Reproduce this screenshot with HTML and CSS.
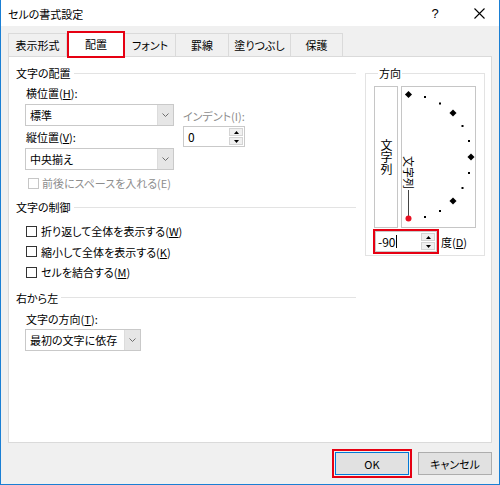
FILE: index.html
```
<!DOCTYPE html>
<html lang="ja">
<head>
<meta charset="utf-8">
<title>セルの書式設定</title>
<link rel="stylesheet" href="styles.css">
</head>
<body>
<div class="window">
  <div class="titlebar">
    <span class="title">セルの書式設定</span>
    <span class="tb-btn help">?</span>
    <span class="tb-btn close"><svg width="11" height="11" viewBox="0 0 11 11"><path d="M0.5 0.5L10.5 10.5M10.5 0.5L0.5 10.5" stroke="#000" stroke-width="1.1" fill="none"/></svg></span>
  </div>
  <div class="main">
    <div class="tabs">
      <div class="tab t1">表示形式</div>
      <div class="tab active">配置</div>
      <div class="tab t3">フォント</div>
      <div class="tab t4">罫線</div>
      <div class="tab t5">塗りつぶし</div>
      <div class="tab t6">保護</div>
    </div>
    <div class="panel">
      <div class="left">
        <div class="ghead">文字の配置</div>
        <div class="sec">
          <div class="align-row">
            <div class="col-sel">
              <div class="lbl">横位置(<u>H</u>):</div>
              <div class="select sel-wide gap3"><span class="v">標準</span><span class="dd"><svg width="7" height="4" viewBox="0 0 7 4"><path d="M0.5 0.5L3.5 3.5L6.5 0.5" stroke="#6d6d6d" fill="none"/></svg></span></div>
              <div class="lbl gap3">縦位置(<u>V</u>):</div>
              <div class="select sel-wide gap3"><span class="v">中央揃え</span><span class="dd"><svg width="7" height="4" viewBox="0 0 7 4"><path d="M0.5 0.5L3.5 3.5L6.5 0.5" stroke="#6d6d6d" fill="none"/></svg></span></div>
            </div>
            <div class="col-indent">
              <div class="lbl dis">インデント(I):</div>
              <div class="spin indent-spin">
                <span class="val">0</span>
                <span class="arrows">
                  <span class="ar"><svg width="5" height="3" viewBox="0 0 5 3"><path d="M0 3L2.5 0L5 3Z" fill="#000"/></svg></span>
                  <span class="ar"><svg width="5" height="3" viewBox="0 0 5 3"><path d="M0 0L2.5 3L5 0Z" fill="#000"/></svg></span>
                </span>
              </div>
            </div>
          </div>
          <div class="check dis-row"><span class="box"></span>前後にスペースを入れる(E)</div>
        </div>
        <div class="ghead gh2">文字の制御</div>
        <div class="sec">
          <div class="check crow first"><span class="box"></span>折り返して全体を表示する(<u>W</u>)</div>
          <div class="check crow"><span class="box"></span>縮小して全体を表示する(<u>K</u>)</div>
          <div class="check crow"><span class="box"></span>セルを結合する(<u>M</u>)</div>
        </div>
        <div class="ghead gh3">右から左</div>
        <div class="sec">
          <div class="lbl gap5">文字の方向(<u>T</u>):</div>
          <div class="select sel-narrow gap2"><span class="v">最初の文字に依存</span><span class="dd"><svg width="7" height="4" viewBox="0 0 7 4"><path d="M0.5 0.5L3.5 3.5L6.5 0.5" stroke="#6d6d6d" fill="none"/></svg></span></div>
        </div>
      </div>
      <fieldset class="orient">
        <legend>方向</legend>
        <div class="dials">
          <div class="box1"><span class="vtext">文字列</span></div>
          <div class="box2">
            <svg width="73" height="140" viewBox="0 0 73 140">
              <g fill="#000">
                <rect x="4" y="5" width="5" height="5" transform="rotate(45 6.5 7.5)"/>
                <rect x="22" y="9" width="2" height="2"/>
                <rect x="37" y="15.5" width="2" height="2"/>
                <rect x="48.5" y="23.5" width="5" height="5" transform="rotate(45 51 26)"/>
                <rect x="59.5" y="38" width="2" height="2"/>
                <rect x="66" y="53" width="2" height="2"/>
                <rect x="66.5" y="67.5" width="5" height="5" transform="rotate(45 69 70)"/>
                <rect x="66" y="85" width="2" height="2"/>
                <rect x="59.5" y="100" width="2" height="2"/>
                <rect x="48.5" y="111.5" width="5" height="5" transform="rotate(45 51 114)"/>
                <rect x="37" y="123" width="2" height="2"/>
                <rect x="22" y="129" width="2" height="2"/>
              </g>
              <text x="0" y="0" transform="translate(6.5 69) rotate(90)" font-size="11" dominant-baseline="central" fill="#000">文字列</text>
              <line x1="6.5" y1="103" x2="6.5" y2="129" stroke="#444" stroke-width="1"/>
              <circle cx="6.5" cy="131.5" r="3" fill="#e81123"/>
            </svg>
          </div>
        </div>
        <div class="deg-row">
          <div class="spin deg-spin">
            <span class="val">-90<span class="caret"></span></span>
            <span class="arrows">
              <span class="ar"><svg width="5" height="3" viewBox="0 0 5 3"><path d="M0 3L2.5 0L5 3Z" fill="#000"/></svg></span>
              <span class="ar"><svg width="5" height="3" viewBox="0 0 5 3"><path d="M0 0L2.5 3L5 0Z" fill="#000"/></svg></span>
            </span>
          </div>
          <span class="deg-lbl">度(<u>D</u>)</span>
        </div>
      </fieldset>
    </div>
    <div class="footer">
      <button class="btn ok">OK</button>
      <button class="btn">キャンセル</button>
    </div>
  </div>
</div>
</body>
</html>
```

FILE: styles.css
```
html, body {
  margin: 0;
  padding: 0;
  background: #fff;
}
body {
  font-family: "Noto Sans CJK JP", "Noto Sans", sans-serif;
  font-size: 11px;
  font-feature-settings: "palt";
  color: #000;
}
.window {
  width: 500px;
  height: 485px;
  box-sizing: border-box;
  border: 1px solid #1a7fd4;
  border-top: 0;
  display: flex;
  flex-direction: column;
  background: #f0f0f0;
}
.titlebar {
  height: 26px;
  flex: none;
  background: #fff;
  display: flex;
  align-items: center;
  padding-top: 1px;
  box-sizing: border-box;
}
.title {
  flex: 1;
  padding-left: 7px;
  font-size: 11px;
}
.tb-btn {
  display: flex;
  align-items: center;
  justify-content: center;
}
.help {
  width: 48px;
  font-family: "Liberation Sans", sans-serif;
  font-size: 13px;
}
.close {
  width: 40px;
}
.main {
  flex: 1;
  display: flex;
  flex-direction: column;
  padding: 7px 7px 0 7px;
}
.tabs {
  display: flex;
  height: 23px;
  flex: none;
}
.tab {
  box-sizing: border-box;
  height: 23px;
  border-top: 1px solid #dadada;
  border-right: 1px solid #dadada;
  text-align: center;
  line-height: 22px;
  background: #f0f0f0;
}
.t1 { width: 59px; border-left: 1px solid #dadada; }
.active {
  width: 58px;
  height: 27px;
  margin-top: -2px;
  border: 2px solid #e60012;
  background: #fff;
  line-height: 23px;
  position: relative;
  z-index: 1;
}
.t3 { width: 51px; }
.t4 { width: 53px; }
.t5 { width: 62px; }
.t6 { width: 52px; }
.panel {
  box-sizing: border-box;
  height: 387px;
  flex: none;
  background: #fff;
  border: 1px solid #dadada;
  padding: 8px 0 0 7px;
  display: grid;
  grid-template-columns: 340px 120px;
  column-gap: 9px;
  align-items: start;
}
.ghead {
  display: flex;
  align-items: center;
  height: 16px;
  line-height: 16px;
}
.ghead::after {
  content: "";
  flex: 1;
  height: 1px;
  background: #e3e3e3;
  margin-left: 3px;
}
.gh2 { margin-top: 8px; }
.gh3 { margin-top: 7px; }
.sec {
  padding-left: 9px;
}
.align-row {
  display: flex;
  margin-top: 4px;
}
.lbl {
  height: 16px;
  line-height: 16px;
  padding-left: 1px;
}
.gap2 { margin-top: 2px; }
.gap3 { margin-top: 3px; }
.gap5 { margin-top: 5px; }
.dis { color: #8d8d8d; }
.select {
  box-sizing: border-box;
  height: 22px;
  border: 1px solid #c9c9c9;
  display: flex;
  background: #fff;
}
.sel-wide { width: 149px; }
.sel-narrow { width: 116px; }
.select .v {
  flex: 1;
  padding-left: 4px;
  line-height: 20px;
}
.select .dd {
  width: 15px;
  background: #e6e6e6;
  border-left: 1px solid #dcdcdc;
  display: flex;
  align-items: center;
  justify-content: center;
}
.col-indent {
  margin-left: 9px;
}
.col-indent .lbl {
  margin-top: 23px;
  padding-left: 0;
}
.spin {
  box-sizing: border-box;
  width: 62px;
  height: 21px;
  border: 1px solid #c9c9c9;
  display: flex;
  background: #fff;
}
.indent-spin { margin-top: 2px; }
.spin .val {
  flex: 1;
  padding-left: 4px;
  line-height: 19px;
  font-size: 12px;
  display: flex;
  align-items: center;
}
.spin .arrows {
  width: 14px;
  display: flex;
  flex-direction: column;
  padding: 1px 1px 1px 0;
  gap: 1px;
  box-sizing: border-box;
  width: 15px;
}
.spin .ar {
  flex: 1;
  background: #f0f0f0;
  border: 1px solid #d4d4d4;
  display: flex;
  align-items: center;
  justify-content: center;
}
.check {
  display: flex;
  align-items: center;
}
.check .box {
  box-sizing: border-box;
  width: 11px;
  height: 11px;
  border: 1px solid #333;
  background: #fff;
  margin-left: 1px;
  margin-right: 4px;
}
.dis-row {
  height: 16px;
  margin-top: 5px;
  color: #8d8d8d;
}
.dis-row .box {
  border-color: #c6c6c6;
  margin-left: 3px;
  margin-right: 3px;
}
.crow {
  height: 20.5px;
}
.crow.first { margin-top: 6px; }
.orient {
  margin: 0;
  padding: 5px 0 3px 8px;
  border: 1px solid #e3e3e3;
  min-width: 0;
}
.orient legend {
  margin-left: 4px;
  padding: 0 1px;
  line-height: 16px;
}
.dials {
  display: flex;
  gap: 3px;
}
.box1 {
  box-sizing: border-box;
  width: 24px;
  height: 142px;
  border: 1px solid #c6c6c6;
  display: flex;
  align-items: center;
  justify-content: center;
}
.vtext {
  writing-mode: vertical-rl;
  font-size: 12px;
  line-height: 12px;
  font-feature-settings: normal;
}
.box2 {
  box-sizing: border-box;
  width: 75px;
  height: 142px;
  border: 1px solid #c6c6c6;
}
.box2 svg {
  display: block;
}
.deg-row {
  display: flex;
  align-items: center;
  margin-top: 3px;
  padding-left: 1px;
}
.deg-spin {
  outline: 2px solid #e60012;
}
.deg-spin .val {
  padding-left: 2px;
}
.caret {
  display: inline-block;
  width: 1px;
  height: 13px;
  background: #000;
  margin-left: 1px;
}
.deg-lbl {
  margin-left: 4px;
  font-size: 11px;
}
.footer {
  display: flex;
  justify-content: flex-end;
  gap: 9px;
  padding-top: 9px;
}
.btn {
  box-sizing: border-box;
  width: 74px;
  height: 23px;
  border: 1px solid #adadad;
  background: #e1e1e1;
  font-family: "Noto Sans CJK JP", "Noto Sans", sans-serif;
  font-size: 11px;
  font-feature-settings: "palt";
  color: #000;
  padding: 0;
}
.ok {
  border-color: #0078d7;
  outline: 2px solid #e60012;
  outline-offset: 1px;
}
```
